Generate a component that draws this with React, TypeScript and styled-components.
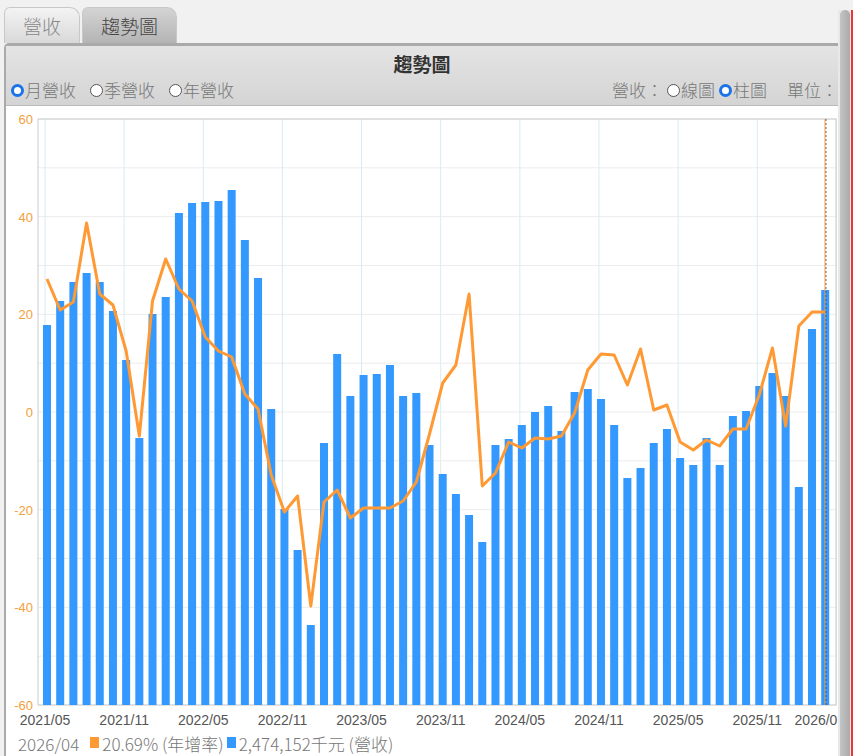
import React from "react";
import styled, { createGlobalStyle } from "styled-components";

const G = createGlobalStyle`
  body{margin:0;background:#f1f1f1;font-family:"Noto Sans CJK TC","Liberation Sans",sans-serif;overflow:hidden;}
`;
const Page = styled.div`display:flex;width:853px;height:756px;`;
const Main = styled.div`width:838px;display:flex;flex-direction:column;padding-top:7px;`;
const Tabs = styled.div`display:flex;gap:2px;padding-left:4px;height:37px;align-items:flex-end;`;
const Tab = styled.div<{ $active?: boolean }>`
  height:36px;box-sizing:border-box;padding:0 18px;display:flex;align-items:center;
  font-size:19px;font-weight:300;color:${p => (p.$active ? "#444" : "#888")};
  border-radius:6px 10px 0 0;border:1px solid #c8c8c8;border-bottom:none;
  background:${p => (p.$active ? "linear-gradient(#d4d4d4,#b4b4b4)" : "linear-gradient(#f3f3f3,#d9d9d9)")};
`;
const Panel = styled.div`
  margin-left:4px;flex:1;border-left:2px solid #aaa;border-top:3px solid #aaa;border-radius:5px 0 0 0;
  background:#fff;display:flex;flex-direction:column;
`;
const Head = styled.div`
  background:linear-gradient(#e4e4e4,#d4d4d4);border-bottom:1px solid #bbb;height:60px;box-sizing:border-box;
  display:flex;flex-direction:column;
`;
const Title = styled.div`text-align:center;font-size:19px;font-weight:bold;color:#333;height:33px;line-height:36px;`;
const Opts = styled.div`display:flex;justify-content:space-between;font-size:17px;font-weight:300;color:#777;padding:0 0 0 5px;line-height:22px;`;
const Grp = styled.div`display:flex;align-items:center;`;
const Radio = styled.span<{ $on?: boolean }>`
  display:inline-block;width:13px;height:13px;border-radius:50%;box-sizing:border-box;
  border:${p => (p.$on ? "3.5px solid #1a73e8" : "1px solid #555")};background:#fff;margin-right:1px;
`;
const Item = styled.span<{ $gap?: number }>`display:flex;align-items:center;margin-right:${p => p.$gap ?? 14}px;`;
const Legend = styled.div`font-size:17px;font-weight:300;color:#777;padding:2px 0 0 12px;display:flex;align-items:flex-end;gap:3px;white-space:nowrap;height:20px;overflow:hidden;`;
const Sq = styled.span<{ c: string }>`display:inline-block;width:9px;height:11px;background:${p => p.c};margin-bottom:8px;`;
const Scroll = styled.div`width:13px;margin-top:10px;background:#e8e8e8;display:flex;justify-content:center;border-right:2px solid #e33;`;
const Thumb = styled.div`width:10px;height:100%;background:linear-gradient(90deg,#c4c4c4,#aaa);border-radius:5px 5px 0 0;`;

const bars = [326,302,283,274,283,312,361,439,315,298,214,204,203,202,191,241,279,410,510,551,626,444,355,397,376,375,366,397,394,446,475,495,516,543,446,440,426,413,407,432,393,390,400,426,479,469,444,430,459,466,439,466,417,412,387,374,397,488,330,291];
const line = [280,311,303,224,295,306,352,437,302,260,290,302,338,352,358,395,410,476,513,497,607,503,491,519,509,509,509,502,483,435,384,366,295,487,474,443,449,439,440,437,414,371,355,356,386,350,411,406,443,451,441,447,430,430,396,349,427,327,313,313];
const bx = (i: number) => 47 + i * 13.19;
const labels = ["2021/05","2021/11","2022/05","2022/11","2023/05","2023/11","2024/05","2024/11","2025/05","2025/11","2026/0"];

const Chart = () => (
  <svg width="832" height="628" viewBox="6 107 832 628" style={{ display: "block" }}>
    {[-60,-50,-40,-30,-20,-10,0,10,20,30,40,50,60].map(v => {
      const y = 413 - v * 4.883;
      return <line key={v} x1={38} x2={836} y1={y} y2={y} stroke="#ececec" />;
    })}
    {labels.map((_, k) => <line key={k} x1={bx(k * 6) - 2} x2={bx(k * 6) - 2} y1={120} y2={706} stroke="#d8ecf2" />)}
    <rect x={38} y={120} width={798} height={586} fill="none" stroke="#ccc" />
    {bars.map((t, i) => <rect key={i} x={bx(i) - 4} y={t} width={8} height={706 - t} fill="#3399ff" />)}
    <polyline points={line.map((y, i) => `${bx(i)},${y}`).join(" ")} fill="none" stroke="#ff9933" strokeWidth={3} strokeLinejoin="round" />
    <line x1={825} x2={825} y1={120} y2={706} stroke="#ff9933" strokeWidth={1} />
    <line x1={826} x2={826} y1={120} y2={706} stroke="#446" strokeDasharray="2 2" strokeWidth={0.8} />
    {[60,40,20,0,-20,-40,-60].map(v => (
      <text key={v} x={33} y={413 - v * 4.883 + 5} textAnchor="end" fontSize={13} fill="#f3a03c" fontFamily="Liberation Sans, sans-serif">{v}</text>
    ))}
    {labels.map((l, k) => (
      <text key={l} x={Math.min(bx(k * 6) - 2, 816)} y={726} textAnchor="middle" fontSize={14} fill="#555" fontFamily="Liberation Sans, sans-serif">{l}</text>
    ))}
  </svg>
);

export default function App() {
  return (
    <Page>
      <G />
      <Main>
        <Tabs><Tab>營收</Tab><Tab $active>趨勢圖</Tab></Tabs>
        <Panel>
          <Head>
            <Title>趨勢圖</Title>
            <Opts>
              <Grp>
                <Item><Radio $on />月營收</Item>
                <Item><Radio />季營收</Item>
                <Item><Radio />年營收</Item>
              </Grp>
              <Grp>
                <Item $gap={4}>營收：</Item>
                <Item $gap={4}><Radio />線圖</Item>
                <Item $gap={20}><Radio $on />柱圖</Item>
                <Item $gap={0}>單位：</Item>
              </Grp>
            </Opts>
          </Head>
          <Chart />
          <Legend>
            <span style={{ marginRight: 8 }}>2026/04</span>
            <Sq c="#ff9933" />20.69% (年增率)<Sq c="#3399ff" />2,474,152千元 (營收)
          </Legend>
        </Panel>
      </Main>
      <Scroll><Thumb /></Scroll>
    </Page>
  );
}
